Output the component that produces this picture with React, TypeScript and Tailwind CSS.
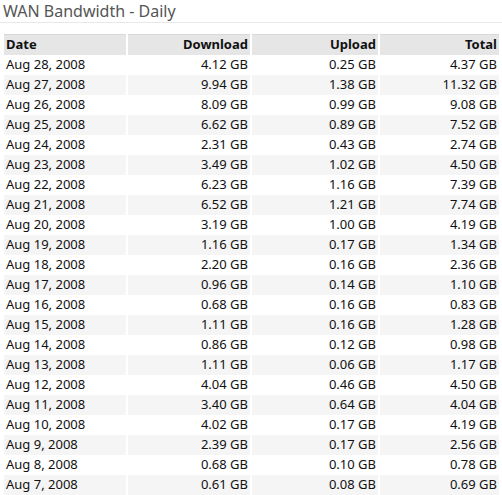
const rows = [
  ['Aug 28, 2008', '4.12 GB', '0.25 GB', '4.37 GB'],
  ['Aug 27, 2008', '9.94 GB', '1.38 GB', '11.32 GB'],
  ['Aug 26, 2008', '8.09 GB', '0.99 GB', '9.08 GB'],
  ['Aug 25, 2008', '6.62 GB', '0.89 GB', '7.52 GB'],
  ['Aug 24, 2008', '2.31 GB', '0.43 GB', '2.74 GB'],
  ['Aug 23, 2008', '3.49 GB', '1.02 GB', '4.50 GB'],
  ['Aug 22, 2008', '6.23 GB', '1.16 GB', '7.39 GB'],
  ['Aug 21, 2008', '6.52 GB', '1.21 GB', '7.74 GB'],
  ['Aug 20, 2008', '3.19 GB', '1.00 GB', '4.19 GB'],
  ['Aug 19, 2008', '1.16 GB', '0.17 GB', '1.34 GB'],
  ['Aug 18, 2008', '2.20 GB', '0.16 GB', '2.36 GB'],
  ['Aug 17, 2008', '0.96 GB', '0.14 GB', '1.10 GB'],
  ['Aug 16, 2008', '0.68 GB', '0.16 GB', '0.83 GB'],
  ['Aug 15, 2008', '1.11 GB', '0.16 GB', '1.28 GB'],
  ['Aug 14, 2008', '0.86 GB', '0.12 GB', '0.98 GB'],
  ['Aug 13, 2008', '1.11 GB', '0.06 GB', '1.17 GB'],
  ['Aug 12, 2008', '4.04 GB', '0.46 GB', '4.50 GB'],
  ['Aug 11, 2008', '3.40 GB', '0.64 GB', '4.04 GB'],
  ['Aug 10, 2008', '4.02 GB', '0.17 GB', '4.19 GB'],
  ['Aug 9, 2008', '2.39 GB', '0.17 GB', '2.56 GB'],
  ['Aug 8, 2008', '0.68 GB', '0.10 GB', '0.78 GB'],
  ['Aug 7, 2008', '0.61 GB', '0.08 GB', '0.69 GB'],
]

export default function App() {
  return (
    <div className="w-[502px] h-[495px] bg-white font-['Liberation_Sans'] text-[13px] text-[#111]">
      <div className="px-[3px] pt-[1px] h-[23px] border-b border-[#e8e8e8] text-[16px] text-[#555] leading-[20px]">
        WAN Bandwidth - Daily
      </div>
      <div className="pt-[11px] pl-[3px]">
        <table className="w-[499px] border-separate border-spacing-x-[2px] border-spacing-y-0 -mx-[1px] border-b-2 border-[#e0e0e0]">
          <thead>
            <tr className="bg-[#e6e6e6] h-[20px]">
              <th className="text-left font-bold px-[2px] w-[122px] border-t border-[#d8d8d8]">Date</th>
              <th className="text-right font-bold px-[2px] w-[122px] border-t border-[#d8d8d8]">Download</th>
              <th className="text-right font-bold px-[2px] w-[126px] border-t border-[#d8d8d8]">Upload</th>
              <th className="text-right font-bold px-[2px] border-t border-[#d8d8d8]">Total</th>
            </tr>
          </thead>
          <tbody>
            {rows.map((r, i) => (
              <tr key={r[0]} className={(i % 2 ? 'bg-[#f5f5f5]' : 'bg-white') + ' h-[20px]'}>
                <td className="text-left px-[2px]">{r[0]}</td>
                <td className="text-right px-[2px]">{r[1]}</td>
                <td className="text-right px-[2px]">{r[2]}</td>
                <td className="text-right px-[2px]">{r[3]}</td>
              </tr>
            ))}
          </tbody>
        </table>
      </div>
    </div>
  )
}
